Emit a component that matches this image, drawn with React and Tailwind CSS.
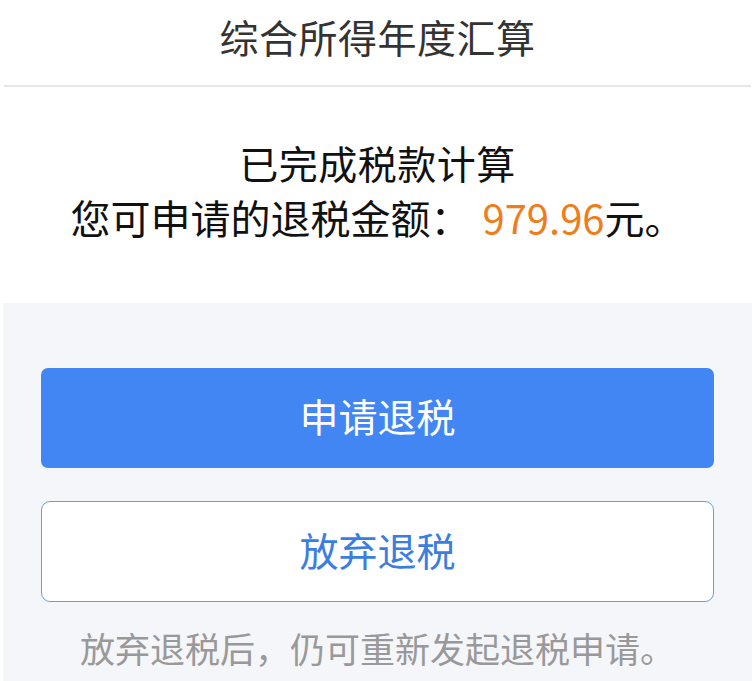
const font = { fontFamily: '"Noto Sans CJK SC", "Noto Sans", sans-serif' }

export default function App() {
  return (
    <div className="w-[755px] h-[681px] overflow-hidden bg-white" style={font}>
      {/* Header */}
      <div className="mx-[4px] h-[87px] border-b-2 border-[#e6e6e6] flex items-start justify-center pt-[9px]">
        <h1 className="text-[39px] leading-[54px] text-[#333333] tracking-[0.5px]">综合所得年度汇算</h1>
      </div>

      {/* Result */}
      <div className="h-[216px] flex flex-col items-center pt-[48px]">
        <p className="text-[39px] leading-[54px] text-[#111111] tracking-[0.5px]">已完成税款计算</p>
        <p className="text-[40px] leading-[56px] text-[#111111]">
          您可申请的退税金额：<span className="ml-[12px] text-[#f07c1c]">979.96</span>元。
        </p>
      </div>

      {/* Actions */}
      <div className="mx-[3px] h-[378px] bg-[#f5f6fa] pt-[65px] px-[38px]">
        <button className="w-full h-[100px] pb-[6px] rounded-[7px] bg-[#4286f4] text-white text-[39px] flex items-center justify-center">
          申请退税
        </button>
        <button className="mt-[33px] w-full h-[101px] pb-[4px] rounded-[9px] bg-white border-[1.5px] border-[#6b9be6] text-[#3b7ee2] text-[39px] flex items-center justify-center">
          放弃退税
        </button>
        <p className="mt-[23px] text-center text-[35px] leading-[46px] text-[#999999]">
          放弃退税后，仍可重新发起退税申请。
        </p>
      </div>
    </div>
  )
}
